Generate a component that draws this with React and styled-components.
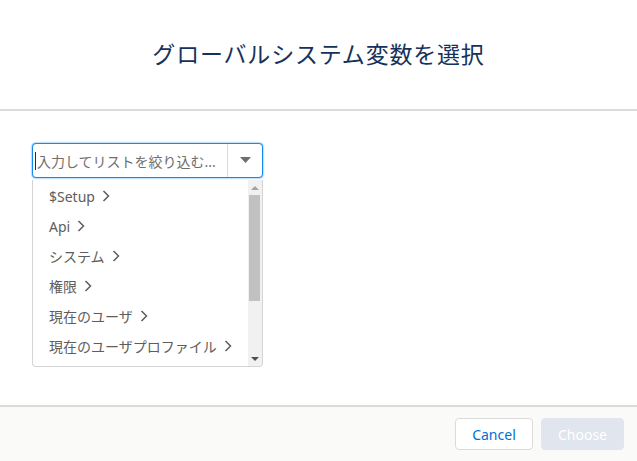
import React from 'react';
import styled, { createGlobalStyle } from 'styled-components';

const GlobalStyle = createGlobalStyle`
  html, body {
    margin: 0;
    padding: 0;
    background: #fff;
  }
  body {
    font-family: 'Noto Sans', 'Noto Sans CJK JP', sans-serif;
  }
`;

const Modal = styled.div`
  display: flex;
  flex-direction: column;
  width: 637px;
  height: 461px;
  background: #fff;
`;

const Header = styled.header`
  display: flex;
  align-items: center;
  justify-content: center;
  height: 111px;
  border-bottom: 2px solid #dddbda;
  box-sizing: border-box;
  padding-bottom: 4px;
`;

const Title = styled.h2`
  margin: 0;
  font-family: 'Noto Sans CJK JP', sans-serif;
  font-size: 23px;
  font-weight: 400;
  letter-spacing: 0.8px;
  color: #16325c;
`;

const Body = styled.main`
  flex: 1;
  padding: 32px 32px 0 32px;
`;

const Combobox = styled.div`
  width: 231px;
`;

const InputRow = styled.div`
  display: flex;
  align-items: stretch;
  height: 35px;
  box-sizing: border-box;
  border: 1px solid #1589ee;
  border-radius: 4px;
  box-shadow: 0 0 2px #1589ee;
  background: #fff;
`;

const InputText = styled.div`
  flex: 1;
  display: flex;
  align-items: center;
  padding-left: 2px;
  font-size: 14px;
  color: #706e6b;
  white-space: nowrap;
  overflow: hidden;
`;

const Cursor = styled.span`
  display: inline-block;
  width: 1px;
  height: 18px;
  margin-right: 1px;
  background: #16325c;
`;

const CaretButton = styled.div`
  display: flex;
  align-items: center;
  justify-content: center;
  width: 34px;
  border-left: 1px solid #dddbda;
`;

const Listbox = styled.div`
  display: flex;
  margin-top: 2px;
  height: 187px;
  box-sizing: border-box;
  border: 1px solid #d4d4d4;
  border-top: none;
  border-radius: 0 0 4px 4px;
  background: #fff;
  overflow: hidden;
`;

const Options = styled.ul`
  flex: 1;
  list-style: none;
  margin: 0;
  padding: 1px 0 0 0;
`;

const Option = styled.li`
  display: flex;
  align-items: center;
  gap: 7px;
  height: 30px;
  padding: 0 16px;
  font-size: 14px;
  color: #5f5d5b;
  white-space: nowrap;
  cursor: pointer;
`;

const Scrollbar = styled.div`
  display: flex;
  flex-direction: column;
  width: 14px;
  background: #f1f1f1;
`;

const ScrollArrow = styled.div`
  display: flex;
  align-items: center;
  justify-content: center;
  height: 15px;
`;

const Thumb = styled.div`
  height: 106px;
  margin: 0 2px 0 1px;
  background: #c1c1c1;
`;

const Track = styled.div`
  flex: 1;
`;

const Footer = styled.footer`
  display: flex;
  justify-content: flex-end;
  align-items: center;
  gap: 8px;
  height: 56px;
  box-sizing: border-box;
  padding: 0 13px 0 0;
  border-top: 2px solid #dddbda;
  background: #fafaf9;
`;

const Button = styled.button`
  height: 32px;
  padding: 0 16px;
  box-sizing: border-box;
  border-radius: 4px;
  font-family: 'Noto Sans', sans-serif;
  font-size: 14px;
  border: 1px solid ${p => (p.$disabled ? '#e0e5ee' : '#dddbda')};
  background: ${p => (p.$disabled ? '#e0e5ee' : '#fff')};
  color: ${p => (p.$disabled ? '#fff' : '#0070d2')};
  min-width: ${p => p.$width}px;
`;

const Chevron = () => (
  <svg width="8" height="12" viewBox="0 0 8 12" fill="none">
    <path d="M1.5 1 L6.5 6 L1.5 11" stroke="#5f5d5b" strokeWidth="1.5" />
  </svg>
);

const items = [
  '$Setup',
  'Api',
  'システム',
  '権限',
  '現在のユーザ',
  '現在のユーザプロファイル',
];

export default function App() {
  return (
    <>
      <GlobalStyle />
      <Modal>
        <Header>
          <Title>グローバルシステム変数を選択</Title>
        </Header>
        <Body>
          <Combobox>
            <InputRow>
              <InputText>
                <Cursor />
                入力してリストを絞り込む...
              </InputText>
              <CaretButton>
                <svg width="11" height="7" viewBox="0 0 11 7">
                  <polygon points="0,0 11,0 5.5,6" fill="#706e6b" />
                </svg>
              </CaretButton>
            </InputRow>
            <Listbox>
              <Options>
                {items.map(item => (
                  <Option key={item}>
                    {item}
                    <Chevron />
                  </Option>
                ))}
              </Options>
              <Scrollbar>
                <ScrollArrow>
                  <svg width="8" height="4" viewBox="0 0 8 4">
                    <polygon points="0,4 4,0 8,4" fill="#a3a3a3" />
                  </svg>
                </ScrollArrow>
                <Thumb />
                <Track />
                <ScrollArrow>
                  <svg width="8" height="4" viewBox="0 0 8 4">
                    <polygon points="0,0 8,0 4,4" fill="#505050" />
                  </svg>
                </ScrollArrow>
              </Scrollbar>
            </Listbox>
          </Combobox>
        </Body>
        <Footer>
          <Button $width={78}>Cancel</Button>
          <Button $width={83} $disabled disabled>
            Choose
          </Button>
        </Footer>
      </Modal>
    </>
  );
}
